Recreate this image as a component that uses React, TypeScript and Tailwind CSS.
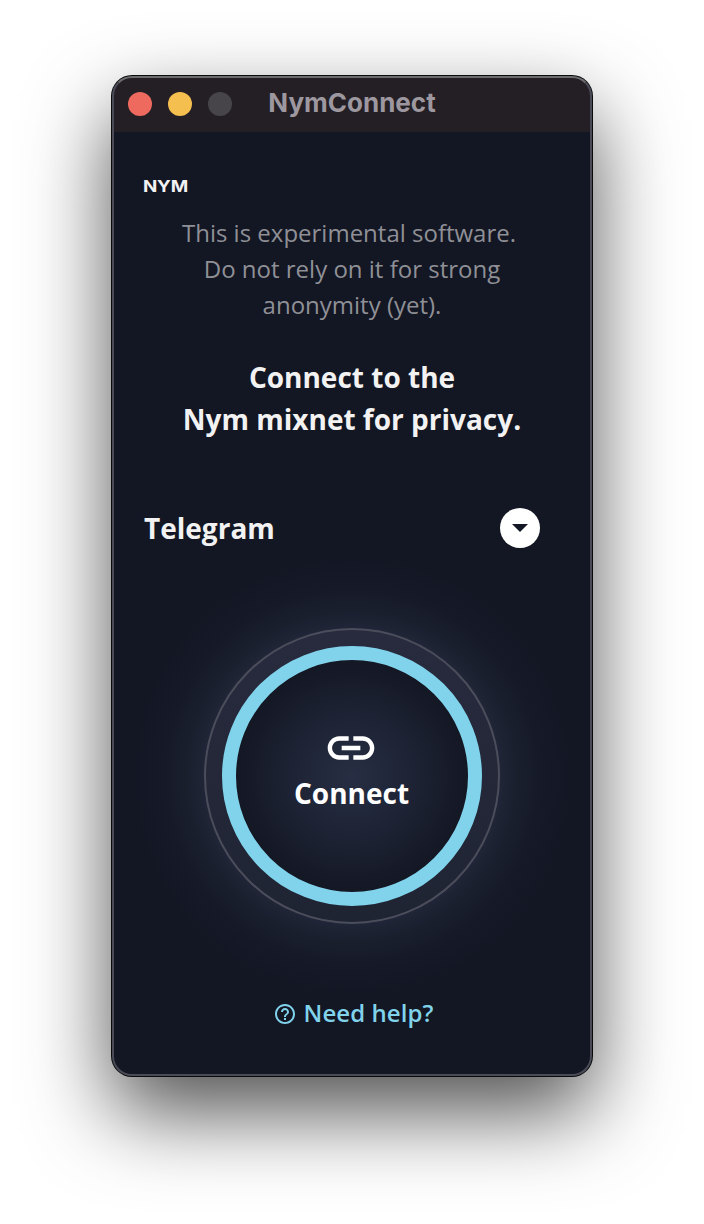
const TitleBar = () => (
  <header className="relative flex h-14 shrink-0 items-center bg-[#231f25] px-4">
    <div className="flex gap-4">
      <span className="size-6 rounded-full bg-[#ee6a5f]" />
      <span className="size-6 rounded-full bg-[#f5bf4f]" />
      <span className="size-6 rounded-full bg-[#474549]" />
    </div>
    <h1 className="absolute inset-x-0 top-[11px] text-center font-['Inter',sans-serif] text-[26px] leading-8 font-bold text-[#9d979f]">
      NymConnect
    </h1>
  </header>
);

const ConnectButton = () => (
  <div className="-mx-8 flex h-[456px] shrink-0 items-center justify-center bg-[radial-gradient(circle_at_center,#292d40_0px,#262a3c_130px,#202537_148px,#1a1f2e_166px,#161a28_187px,#131623_220px)]">
    <div className="flex size-[296px] items-center justify-center rounded-full border-2 border-[#4b4d5b] bg-linear-to-b from-[#282b3e] to-[#1f2433]">
      <button className="flex size-[260px] flex-col items-center rounded-full border-[14px] border-[#80d3eb] bg-[radial-gradient(circle_at_center,#272e43_0%,#1d2334_38%,#141724_70%)] pt-[60px] text-white">
        <svg viewBox="0 0 24 24" className="mr-[2px] size-14 fill-current">
          <path d="M3.9 12c0-1.71 1.39-3.1 3.1-3.1h4V7H7c-2.76 0-5 2.24-5 5s2.24 5 5 5h4v-1.9H7c-1.71 0-3.1-1.39-3.1-3.1zM8 13h8v-2H8v2zm9-6h-4v1.9h4c1.71 0 3.1 1.39 3.1 3.1s-1.39 3.1-3.1 3.1h-4V17h4c2.76 0 5-2.24 5-5s-2.24-5-5-5z" />
        </svg>
        <span className="-mt-1 mr-px text-[28px] leading-[42px] font-bold">Connect</span>
      </button>
    </div>
  </div>
);

export default function App() {
  return (
    <main className="h-[1224px] w-[704px] overflow-hidden bg-white px-28 pt-[76px] font-['Open_Sans',sans-serif]">
      <section className="relative flex h-[1000px] w-[480px] flex-col rounded-[20px] bg-[#131623] shadow-[0_0_0_1px_#080a0c,0_36px_84px_rgba(0,0,0,0.69)]">
        <div className="flex h-full flex-col overflow-hidden rounded-[20px]">
          <TitleBar />
          <div className="flex flex-1 flex-col px-8 pt-11">
            <div className="-ml-px h-[21px] origin-left scale-x-[1.14] font-['Inter',sans-serif] text-[16.5px] leading-[21px] font-bold tracking-[-0.2px] text-[#f2f2f2]">
              NYM
            </div>
            <p className="mt-[18px] text-center text-2xl leading-9 text-[#8f9096]">
              <span className="relative -left-[3px]">This is experimental software.</span>
              <br />
              Do not rely on it for strong
              <br />
              anonymity (yet).
            </p>
            <h2 className="mt-[33px] text-center text-[28px] leading-[42px] font-bold text-[#f2f2f2]">
              Connect to the
              <br />
              Nym mixnet for privacy.
            </h2>
            <div className="mt-[68px] flex h-10 items-center justify-between pr-5">
              <span className="text-[28px] leading-[42px] font-bold text-[#f2f2f2]">Telegram</span>
              <button className="flex size-10 items-center justify-center rounded-full bg-white">
                <svg viewBox="0 0 16 8" className="h-2 w-4 fill-[#131623]">
                  <path d="M0 0h16L8 8z" />
                </svg>
              </button>
            </div>
            <ConnectButton />
            <a className="-mt-1 flex h-7 items-center justify-center gap-[7px] pl-[2px] text-2xl leading-7 font-semibold text-[#80d3eb]">
              <svg viewBox="0 0 24 24" className="size-6 fill-current">
                <path d="M11 18h2v-2h-2v2zm1-16C6.48 2 2 6.48 2 12s4.48 10 10 10 10-4.48 10-10S17.52 2 12 2zm0 18c-4.41 0-8-3.59-8-8s3.59-8 8-8 8 3.59 8 8-3.59 8-8 8zm0-14c-2.21 0-4 1.79-4 4h2c0-1.1.9-2 2-2s2 .9 2 2c0 2-3 1.75-3 5h2c0-2.25 3-2.5 3-5 0-2.21-1.79-4-4-4z" />
              </svg>
              <span className="-mt-[2px] tracking-[0.06px]">Need help?</span>
            </a>
          </div>
        </div>
        <div className="pointer-events-none absolute inset-0 rounded-[20px] border-2 border-[#4a4b56] border-t-[#6c6c6c]" />
      </section>
    </main>
  );
}
